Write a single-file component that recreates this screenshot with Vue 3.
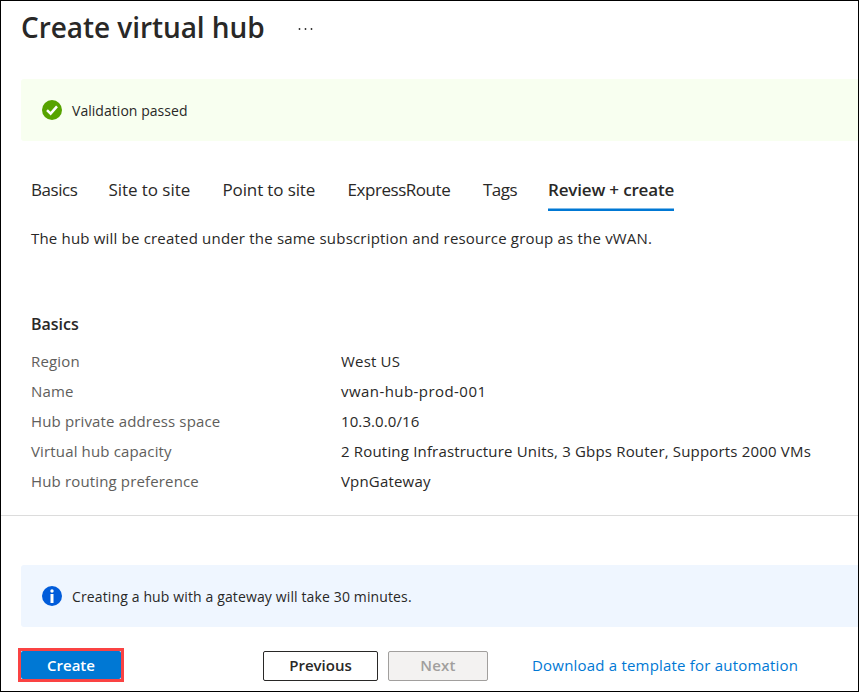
<script setup>
const tabs = [
  { label: 'Basics', cls: 'basics' },
  { label: 'Site to site', cls: 'site' },
  { label: 'Point to site', cls: 'point' },
  { label: 'ExpressRoute', cls: 'express' },
  { label: 'Tags', cls: 'tags' },
  { label: 'Review + create', cls: 'active' },
]
const rows = [
  ['Region', 'West US', 'r1'],
  ['Name', 'vwan-hub-prod-001', 'r2'],
  ['Hub private address space', '10.3.0.0/16', 'r3'],
  ['Virtual hub capacity', '2 Routing Infrastructure Units, 3 Gbps Router, Supports 2000 VMs', 'r4'],
  ['Hub routing preference', 'VpnGateway', 'r5'],
]
</script>

<template>
  <main class="page">
    <header class="header">
      <h1>Create virtual hub</h1>
      <svg class="more" width="16" height="4" viewBox="0 0 16 4" aria-label="More">
        <circle cx="2.5" cy="2" r="0.9" /><circle cx="8.5" cy="2" r="0.9" /><circle cx="14.5" cy="2" r="0.9" />
      </svg>
    </header>

    <div class="notice success">
      <svg width="20" height="20" viewBox="0 0 20 20">
        <circle cx="10" cy="10" r="10" fill="#57a300" />
        <path d="M5 10.2 8.6 13.6 15 6.4" fill="none" stroke="#fff" stroke-width="2.5" />
      </svg>
      <span>Validation passed</span>
    </div>

    <nav class="tabs">
      <a v-for="t in tabs" :key="t.label" class="tab" :class="t.cls">{{ t.label }}</a>
    </nav>

    <p class="intro">The hub will be created under the same subscription and resource group as the vWAN.</p>

    <h2>Basics</h2>
    <dl>
      <div v-for="r in rows" :key="r[0]" class="row" :class="r[2]">
        <dt>{{ r[0] }}</dt>
        <dd>{{ r[1] }}</dd>
      </div>
    </dl>

    <footer class="footer">
      <div class="notice info">
        <svg width="20" height="20" viewBox="0 0 20 20">
          <circle cx="10" cy="10" r="10" fill="#015cda" />
          <circle cx="10" cy="5" r="1.7" fill="#fff" />
          <rect x="8.5" y="8" width="3" height="9" fill="#fff" />
        </svg>
        <span>Creating a hub with a gateway will take 30 minutes.</span>
      </div>
      <div class="actions">
        <div class="highlight"><button class="create">Create</button></div>
        <button class="previous">Previous</button>
        <button class="next" disabled>Next</button>
        <a class="download">Download a template for automation</a>
      </div>
    </footer>
  </main>
</template>

<style>
body { margin: 0; background: #fff; }
</style>

<style scoped>
.page {
  box-sizing: border-box;
  width: 859px;
  height: 692px;
  border: 1px solid #000;
  background: #fff;
  color: #292827;
  font-family: "Open Sans", "Noto Sans", sans-serif;
  font-size: 15px;
  overflow: hidden;
  white-space: nowrap;
}
h1, h2, p, dl, dd { margin: 0; }
.header { display: flex; height: 78px; padding-left: 20px; }
h1 { width: 276px; font-size: 28px; font-weight: 600; line-height: 52px; letter-spacing: -0.06px; }
.more { margin-top: 26px; fill: #292827; }
.notice {
  box-sizing: border-box;
  display: flex;
  align-items: center;
  gap: 10px;
  height: 62px;
  margin-left: 20px;
  padding-left: 21px;
  border-radius: 3px 0 0 3px;
  font-size: 14px;
}
.success { background: #f8fff0; letter-spacing: 0.04px; }
.info { background: #eff6ff; letter-spacing: 0.13px; }
.tabs { display: flex; height: 70px; padding-left: 30px; font-size: 17px; }
.tab {
  box-sizing: border-box;
  height: 70px;
  line-height: 24px;
  padding-top: 37px;
}
.basics { width: 77.5px; letter-spacing: -0.45px; }
.site { width: 114px; letter-spacing: -0.06px; }
.point { width: 125px; letter-spacing: -0.13px; }
.express { width: 135.5px; letter-spacing: -0.45px; }
.tags { width: 65px; letter-spacing: -0.5px; }
.active {
  width: 126px;
  border-bottom: 2px solid #0078d4;
  box-shadow: inset 0 -1px #7fbbe9;
  font-weight: 600;
  letter-spacing: -0.17px;
}
.intro { padding: 16px 0 1px 30px; line-height: 22px; letter-spacing: 0.19px; }
h2 { padding: 62px 0 0 30px; font-size: 16px; font-weight: 600; line-height: 24px; }
dl { padding: 10px 0 19px 30px; }
.row { display: flex; height: 30px; line-height: 30px; }
dt { width: 310px; color: #605e5c; letter-spacing: 0.15px; }
dd { letter-spacing: 0.18px; }
.r2 dd { letter-spacing: 0.44px; }
.r3 dd { letter-spacing: 0.1px; }
.footer { padding-top: 49px; border-top: 1px solid #dcdcdc; }
.actions { display: flex; align-items: flex-start; padding: 21px 0 0 17px; }
.highlight { border: 3px solid #fa4343; background: #fff; width: 100px; height: 28px; }
button {
  box-sizing: border-box;
  height: 30px;
  padding: 0 0 2px;
  border: 1px solid #292827;
  border-radius: 2px;
  background: #fff;
  color: #292827;
  font: 600 15px/26px "Open Sans", "Noto Sans", sans-serif;
}
.create { display: block; width: 100px; height: 28px; padding: 0; border: 0; background: #0078d4; color: #fff; }
.previous { width: 115px; margin: 3px 10px 0 139px; }
.next { width: 100px; margin-top: 3px; border-color: #a19f9d; background: #f3f2f1; color: #a19f9d; letter-spacing: 0.2px; }
.download { margin: 6px 0 0 44px; line-height: 22px; color: #0078d4; letter-spacing: 0.2px; }
</style>
